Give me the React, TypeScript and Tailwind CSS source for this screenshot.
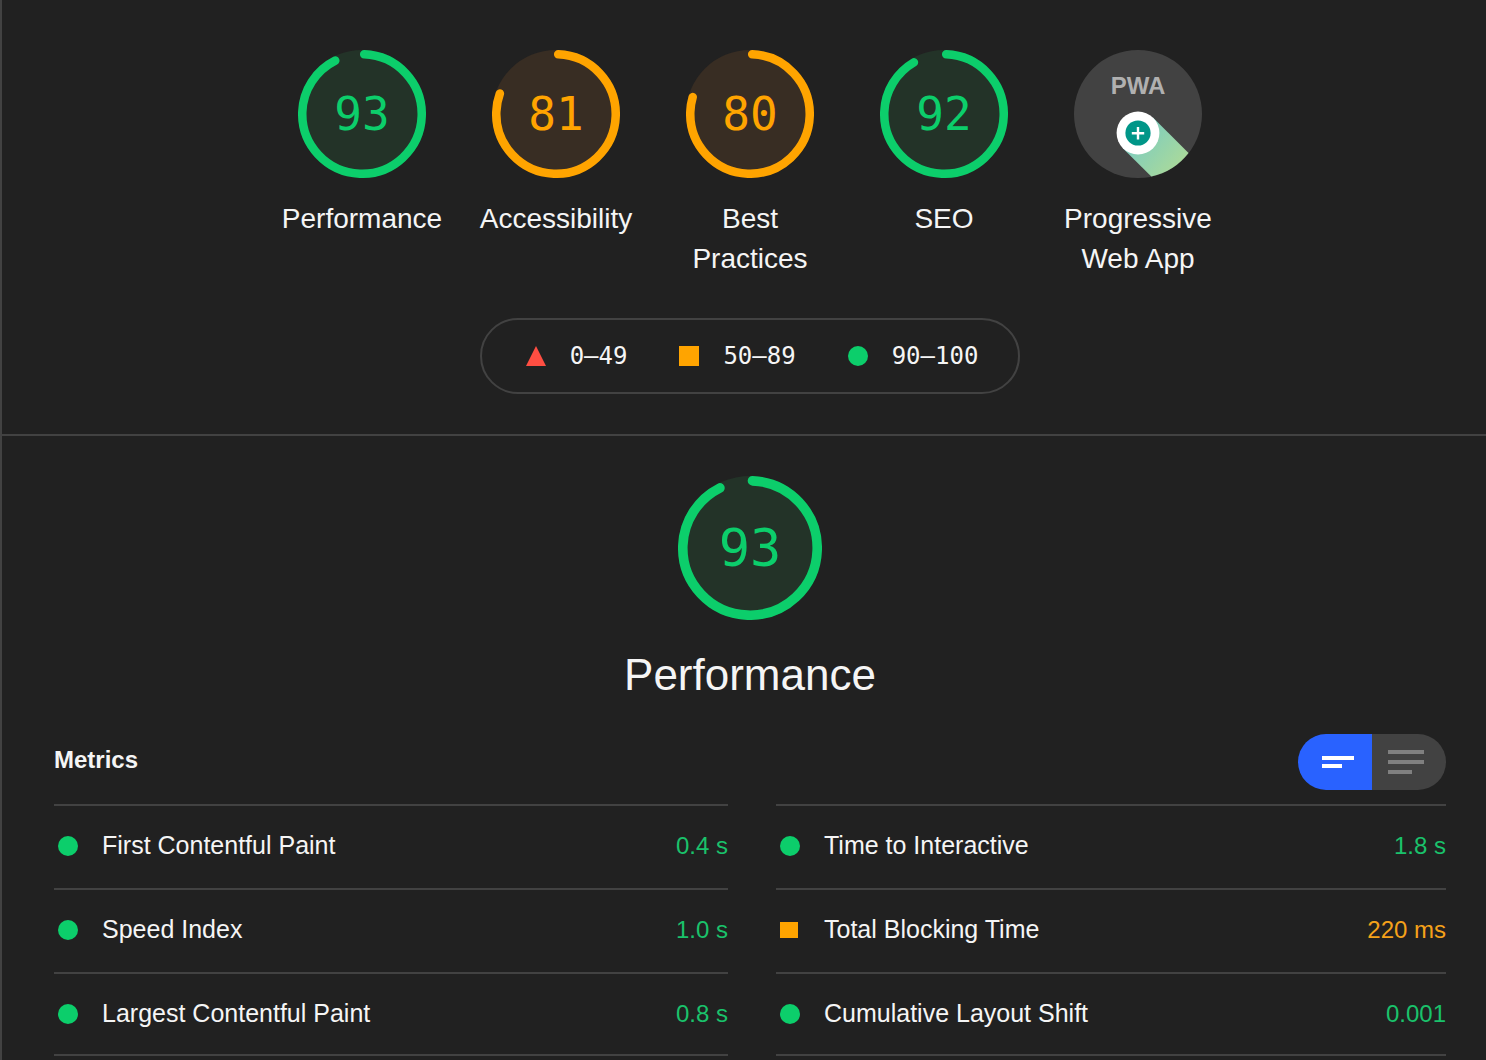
import { useState } from 'react';
import { clsx } from 'clsx';

type Rating = 'pass' | 'average' | 'fail';

interface Score {
  id: string;
  label: string;
  score: number;
}

interface Metric {
  label: string;
  value: string;
  rating: Rating;
}

const scores: Score[] = [
  { id: 'performance', label: 'Performance', score: 93 },
  { id: 'accessibility', label: 'Accessibility', score: 81 },
  { id: 'best-practices', label: 'Best Practices', score: 80 },
  { id: 'seo', label: 'SEO', score: 92 },
];

const leftMetrics: Metric[] = [
  { label: 'First Contentful Paint', value: '0.4 s', rating: 'pass' },
  { label: 'Speed Index', value: '1.0 s', rating: 'pass' },
  { label: 'Largest Contentful Paint', value: '0.8 s', rating: 'pass' },
];

const rightMetrics: Metric[] = [
  { label: 'Time to Interactive', value: '1.8 s', rating: 'pass' },
  { label: 'Total Blocking Time', value: '220 ms', rating: 'average' },
  { label: 'Cumulative Layout Shift', value: '0.001', rating: 'pass' },
];

const textColor: Record<Rating, string> = {
  pass: 'text-[#0cce6b]',
  average: 'text-[#ffa400]',
  fail: 'text-[#ff4e42]',
};

const gaugeFill: Record<Rating, string> = {
  pass: 'fill-[#233328]',
  average: 'fill-[#382d23]',
  fail: 'fill-[#372524]',
};

const valueColor: Record<Rating, string> = {
  pass: 'text-[#1ac26b]',
  average: 'text-[#f5a11a]',
  fail: 'text-[#ff4e42]',
};

const RADIUS = 56;
const STROKE = 8;

function getRating(score: number): Rating {
  if (score >= 90) return 'pass';
  if (score >= 50) return 'average';
  return 'fail';
}

function Gauge({ score, large }: { score: number; large?: boolean }) {
  const rating = getRating(score);
  const circumference = 2 * Math.PI * RADIUS;
  // leave room for the rounded cap
  const arc = (score / 100) * circumference - STROKE / 2;

  return (
    <div
      className={clsx(
        'grid place-items-center shrink-0',
        large ? 'size-36' : 'size-32',
        textColor[rating],
      )}
    >
      <svg viewBox="0 0 120 120" className="col-start-1 row-start-1 size-full" aria-hidden="true">
        <circle cx="60" cy="60" r="60" className={gaugeFill[rating]} />
        <circle
          cx="60"
          cy="60"
          r={RADIUS}
          fill="none"
          stroke="currentColor"
          strokeWidth={STROKE}
          strokeLinecap="round"
          strokeDasharray={`${arc} ${circumference}`}
          transform="rotate(-87.9 60 60)"
        />
      </svg>
      <span
        className={clsx(
          'col-start-1 row-start-1 font-["DejaVu_Sans_Mono",monospace] leading-none',
          large ? 'text-[52px]' : 'text-[46px]',
        )}
      >
        {score}
      </span>
    </div>
  );
}

function PwaBadge() {
  return (
    <svg viewBox="0 0 128 128" className="size-32" aria-hidden="true">
      <defs>
        <linearGradient id="pwa-trail" x1="60" y1="85" x2="100" y2="120" gradientUnits="userSpaceOnUse">
          <stop offset="0" stopColor="#7cccc0" />
          <stop offset="1" stopColor="#a8d99c" />
        </linearGradient>
      </defs>
      <circle cx="64" cy="64" r="64" fill="#424242" />
      <text
        x="64"
        y="44"
        textAnchor="middle"
        fill="#b0b0b0"
        className='font-["Liberation_Sans",Arial,sans-serif] text-[24px] font-bold'
      >
        PWA
      </text>
      <path d="M79.2 67.8 L114.5 103.1 A64 64 0 0 1 77.3 126.6 L48.8 98.2 Z" fill="url(#pwa-trail)" />
      <circle cx="64" cy="83" r="21.4" fill="#fff" />
      <circle cx="64" cy="83" r="12.6" fill="#009688" />
      <path d="M64 77v12.4M57.8 83.2h12.4" stroke="#fff" strokeWidth="2.4" />
    </svg>
  );
}

function RatingIcon({ rating, compact }: { rating: Rating; compact?: boolean }) {
  if (rating === 'pass') return <span className="size-5 rounded-full bg-[#0cce6b]" />;
  if (rating === 'average') {
    return <span className={clsx('bg-[#ffa400]', compact ? 'mr-0.5 h-4 w-[18px]' : 'size-5')} />;
  }
  return (
    <svg viewBox="0 0 20 20" className="size-5" aria-hidden="true">
      <path d="M10 0 20 20H0Z" fill="#ff4e42" />
    </svg>
  );
}

function LegendItem({ rating, range }: { rating: Rating; range: string }) {
  return (
    <span className="flex items-center gap-6">
      <RatingIcon rating={rating} />
      {range}
    </span>
  );
}

function MetricList({ metrics }: { metrics: Metric[] }) {
  return (
    <dl className="border-b-2 border-[#424242]">
      {metrics.map((metric, i) => (
        <div
          key={metric.label}
          className={clsx('border-t-2 border-[#424242]', i < metrics.length - 1 && 'pb-0.5')}
        >
          <div className="flex h-20 items-center justify-between">
            <dt className="flex items-center gap-6 pl-1 text-[25px]">
              <RatingIcon rating={metric.rating} compact />
              {metric.label}
            </dt>
            <dd className={clsx('text-2xl', valueColor[metric.rating])}>{metric.value}</dd>
          </div>
        </div>
      ))}
    </dl>
  );
}

function ViewToggle() {
  const [view, setView] = useState('compact');

  return (
    <div role="radiogroup" aria-label="Metrics view" className="flex h-14 overflow-hidden rounded-full">
      <label
        className={clsx(
          'flex w-[74px] cursor-pointer flex-col justify-center gap-1 pl-6',
          view === 'compact' ? 'bg-[#2962ff] text-white' : 'bg-[#424242] text-[#808080]',
        )}
      >
        <input
          type="radio"
          name="view"
          aria-label="Compact view"
          className="sr-only"
          checked={view === 'compact'}
          onChange={() => setView('compact')}
        />
        <span className="h-1 w-8 bg-current" />
        <span className="h-1 w-5 bg-current" />
      </label>
      <label
        className={clsx(
          'flex w-[74px] cursor-pointer flex-col justify-center gap-1.5 pl-4',
          view === 'expanded' ? 'bg-[#2962ff] text-white' : 'bg-[#424242] text-[#808080]',
        )}
      >
        <input
          type="radio"
          name="view"
          aria-label="Expanded view"
          className="sr-only"
          checked={view === 'expanded'}
          onChange={() => setView('expanded')}
        />
        <span className="h-1 w-9 bg-current" />
        <span className="h-1 w-9 bg-current" />
        <span className="h-1 w-6 bg-current" />
      </label>
    </div>
  );
}

export default function App() {
  return (
    <div className='min-h-screen border-l-2 border-[#424242] bg-[#212121] font-["Liberation_Sans",Arial,sans-serif] text-[#f5f5f5]'>
      <header className="flex flex-col items-center border-b-2 border-[#424242] pt-[50px] pr-10 pb-10 pl-[52px]">
        <nav className="flex justify-center gap-8 text-center text-[28px] leading-10">
          {scores.map((item) => (
            <a key={item.id} href={`#${item.id}`} className="flex w-[162px] flex-col items-center gap-[21px]">
              <Gauge score={item.score} />
              {item.label}
            </a>
          ))}
          <a href="#pwa" className="flex w-[162px] flex-col items-center gap-[21px]">
            <PwaBadge />
            Progressive Web App
          </a>
        </nav>

        <div className='mt-[39px] flex h-[76px] items-center gap-[52px] rounded-full border-2 border-[#424242] pr-10 pl-11 font-["DejaVu_Sans_Mono",monospace] text-2xl'>
          <LegendItem rating="fail" range="0–49" />
          <LegendItem rating="average" range="50–89" />
          <LegendItem rating="pass" range="90–100" />
        </div>
      </header>

      <main id="performance" className="pt-10 pr-10 pl-[52px]">
        <div className="flex flex-col items-center gap-[30px]">
          <Gauge score={93} large />
          <h1 className="text-[44px] leading-[50px]">Performance</h1>
        </div>

        <div className="mt-[34px] flex items-start justify-between">
          <h2 className="text-2xl leading-[52px] font-bold">Metrics</h2>
          <ViewToggle />
        </div>

        <div className="mt-3.5 grid grid-cols-[337fr_335fr] gap-12">
          <MetricList metrics={leftMetrics} />
          <MetricList metrics={rightMetrics} />
        </div>
      </main>
    </div>
  );
}
